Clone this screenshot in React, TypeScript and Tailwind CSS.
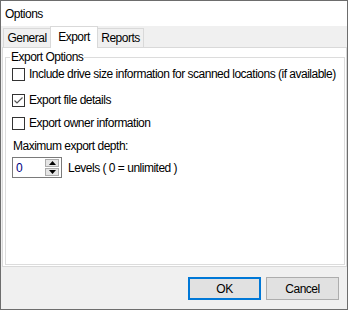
import { useState } from 'react';

const font = { fontFamily: '"Liberation Sans", Arial, sans-serif' };

function CheckBox({ checked, label, onToggle }: { checked: boolean; label: string; onToggle: () => void }) {
  return (
    <label className="flex items-center h-[13px] cursor-default" onClick={onToggle}>
      <span className="w-[13px] h-[13px] border border-[#333333] bg-white flex items-center justify-center shrink-0">
        {checked && (
          <svg width="11" height="11" viewBox="0 0 11 11">
            <path d="M1.5 5.5 L4 8 L9.5 2.5" fill="none" stroke="#555555" strokeWidth="1.2" />
          </svg>
        )}
      </span>
      <span className="ml-[4px] text-[12px] text-black leading-[13px] whitespace-nowrap">{label}</span>
    </label>
  );
}

export default function App() {
  const [driveSize, setDriveSize] = useState(false);
  const [fileDetails, setFileDetails] = useState(true);
  const [owner, setOwner] = useState(false);
  const [depth, setDepth] = useState(0);

  return (
    <div className="w-[349px] h-[311px] bg-white tracking-[-0.5px]" style={font}>
      <div className="w-[348px] h-[310px] border border-[#6d6d6d] bg-[#f0f0f0] flex flex-col">
        {/* title bar */}
        <div className="h-[25px] bg-white flex items-center pl-[4px] text-[12px] text-black">Options</div>

        {/* tabs */}
        <div className="flex items-end h-[21px] pl-[2px] relative z-10">
          <div className="w-[48px] h-[19px] border border-b-0 border-[#d9d9d9] bg-[#f0f0f0] flex items-center justify-center text-[12px] text-black">
            General
          </div>
          <div className="w-[48px] h-[22px] -ml-px -mb-px border border-b-0 border-[#d9d9d9] bg-white flex items-center justify-center text-[12px] text-black pb-[2px]">
            Export
          </div>
          <div className="w-[47px] h-[19px] -ml-px border border-b-0 border-[#d9d9d9] bg-[#f0f0f0] flex items-center justify-center text-[12px] text-black">
            Reports
          </div>
        </div>

        {/* tab panel */}
        <div className="ml-[1px] w-[345px] h-[220px] border border-[#d9d9d9] bg-white pl-[2px] pr-px pb-px pt-[2px] flex flex-col">
          <fieldset className="flex-1 border border-[#dcdcdc] pl-[6px] pt-[3px]">
            <legend className="-ml-[2px] px-[1px] text-[12px] text-black leading-[15px]">Export Options</legend>
            <div className="flex flex-col">
              <CheckBox
                checked={driveSize}
                label="Include drive size information for scanned locations (if available)"
                onToggle={() => setDriveSize(!driveSize)}
              />
              <div className="mt-[13px]">
                <CheckBox checked={fileDetails} label="Export file details" onToggle={() => setFileDetails(!fileDetails)} />
              </div>
              <div className="mt-[10px]">
                <CheckBox checked={owner} label="Export owner information" onToggle={() => setOwner(!owner)} />
              </div>
              <div className="mt-[9px] pl-px text-[12px] text-black leading-[15px]">Maximum export depth:</div>
              <div className="mt-[3px] flex items-center">
                <div className="w-[50px] h-[21px] border border-[#7a7a7a] bg-white flex items-center pl-[3px] pr-[2px]">
                  <span className="flex-1 text-[12px] text-[#00007f]">{depth}</span>
                  <div className="flex flex-col gap-px">
                    <button
                      className="w-[14px] h-[8px] bg-[#e5e5e5] border border-[#acacac] flex items-center justify-center"
                      onClick={() => setDepth(depth + 1)}
                    >
                      <svg width="7" height="4" viewBox="0 0 7 4">
                        <path d="M0 4 L3.5 0 L7 4 Z" fill="#000" />
                      </svg>
                    </button>
                    <button
                      className="w-[14px] h-[8px] bg-[#e5e5e5] border border-[#acacac] flex items-center justify-center"
                      onClick={() => setDepth(Math.max(0, depth - 1))}
                    >
                      <svg width="7" height="4" viewBox="0 0 7 4">
                        <path d="M0 0 L7 0 L3.5 4 Z" fill="#000" />
                      </svg>
                    </button>
                  </div>
                </div>
                <span className="ml-[6px] text-[12px] text-black">Levels ( 0 = unlimited )</span>
              </div>
            </div>
          </fieldset>
        </div>

        {/* buttons */}
        <div className="flex justify-end gap-[5px] pr-[8px] pt-[10px]">
          <button className="w-[73px] h-[23px] border-2 border-[#0078d7] bg-[#e1e1e1] text-[12px] text-black">OK</button>
          <button className="w-[73px] h-[23px] border border-[#adadad] bg-[#e1e1e1] text-[12px] text-black">Cancel</button>
        </div>
      </div>
    </div>
  );
}
